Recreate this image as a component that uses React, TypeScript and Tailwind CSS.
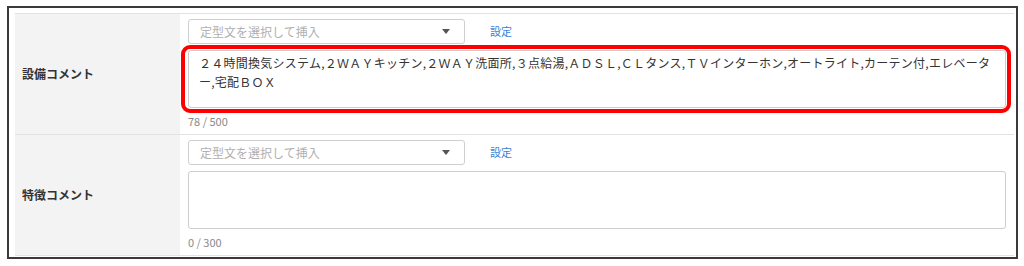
import React from "react";

const jp = "font-['Noto_Sans_CJK_JP',sans-serif]";

const CommentRow = ({
  label,
  value,
  max,
  highlight,
}: {
  label: string;
  value: string;
  max: number;
  highlight?: boolean;
}) => {
  return (
    <div className="grid grid-cols-[165px_1fr] h-[121px] border-t border-[#e3e3e3]">
      {/* label */}
      <div className="bg-[#f3f3f3] flex items-center pl-[7px]">
        <span className="text-[12px] font-bold text-[#333]">{label}</span>
      </div>

      {/* field */}
      <div className="pl-[8px] pr-[8px] pt-[5px]">
        <div className="flex items-center">
          <div className="w-[277px] h-[25px] border border-[#cfcfcf] rounded-[3px] flex items-center justify-between pl-[11px] pr-[14px]">
            <span className="text-[12px] text-[#b0b0b0]">定型文を選択して挿入</span>
            <span className="w-0 h-0 border-l-[4px] border-r-[4px] border-t-[5px] border-l-transparent border-r-transparent border-t-[#555]"></span>
          </div>
          <span className="ml-[25px] text-[11px] text-[#3a7fd6]">設定</span>
        </div>

        <div className="relative mt-[6px]">
          <textarea
            readOnly
            value={value}
            className={`${jp} block w-full h-[58px] resize-none border border-[#cdcdcd] rounded-[3px] pl-[10px] pr-[10px] pt-[2px] text-[12px] leading-[19px] tracking-[0.25px] text-[#333] outline-none`}
          />
          {highlight && (
            <div className="absolute left-[-7px] right-[-5px] top-[-5px] bottom-[-5px] border-[4px] border-[#ff0000] rounded-[9px] pointer-events-none"></div>
          )}
        </div>

        <div className="mt-[6px] text-[11px] leading-[14px] text-[#8a8a8a]">
          {value.length} / {max}
        </div>
      </div>
    </div>
  );
};

const App = () => {
  return (
    <div className={`${jp} w-[1024px] h-[266px] bg-white pt-[6px] pl-[7px]`}>
      <div className="w-[1011px] h-[253px] border-2 border-[#3a3a3a] pl-[6px] pt-[5px] pr-[2px]">
        <CommentRow
          label="設備コメント"
          value="２４時間換気システム,２ＷＡＹキッチン,２ＷＡＹ洗面所,３点給湯,ＡＤＳＬ,ＣＬタンス,ＴＶインターホン,オートライト,カーテン付,エレベーター,宅配ＢＯＸ"
          max={500}
          highlight
        />
        <div className="border-b border-[#e3e3e3]">
          <CommentRow label="特徴コメント" value="" max={300} />
        </div>
      </div>
    </div>
  );
};

export default App;
